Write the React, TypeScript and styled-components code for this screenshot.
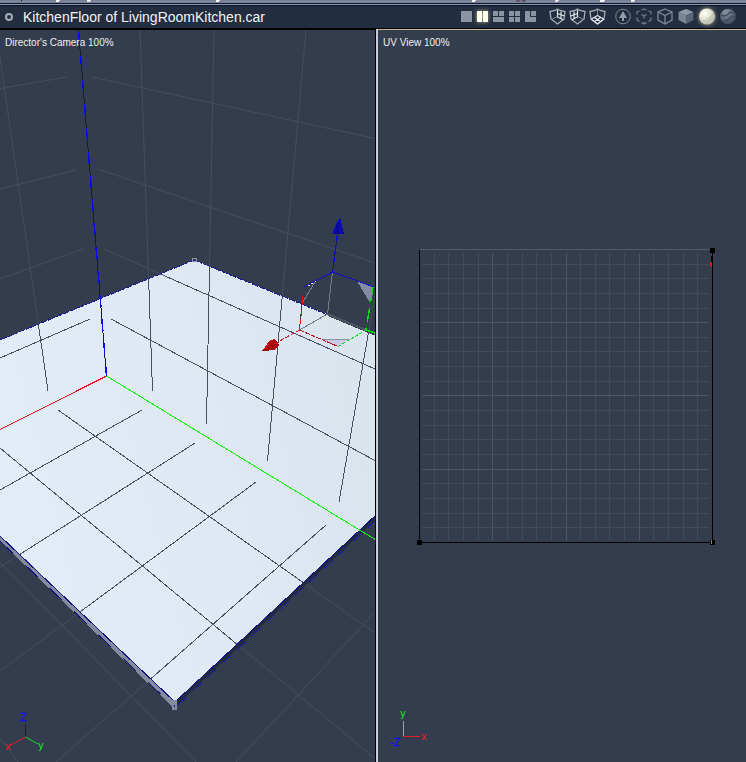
import React from "react";
import styled, { createGlobalStyle } from "styled-components";

const GlobalStyle = createGlobalStyle`
  *, *::before, *::after { box-sizing: border-box; }
  body { margin: 0; background: #333d4e; font-family: "Liberation Sans", Arial, sans-serif; }
`;

const Window = styled.main`
  display: flex;
  flex-direction: column;
  height: 100vh;
  overflow: hidden;
`;

const PaletteEdge = styled.div`
  flex: none;
  height: 6px;
  background: linear-gradient(#7b849a 0 3px, #0c1427 3px 4px, #8e9bb4 4px 5px, #0c1427 5px 6px);
  svg { display: block; }
`;

const Toolbar = styled.header`
  flex: none;
  display: flex;
  align-items: center;
  height: 23px;
  padding: 0 7px 1px 5px;
  gap: 6px;
  background: #232d40;
  border-bottom: 1px solid #000;
`;

const Title = styled.h1`
  flex: 1;
  min-width: 0;
  margin: 0 0 0 4px;
  font-size: 14px;
  line-height: 20px;
  font-weight: 400;
  color: #f1f3f5;
  white-space: nowrap;
  overflow: hidden;
`;

const ToolGroup = styled.div<{ $after?: number }>`
  display: flex;
  margin-right: ${(p) => p.$after ?? 0}px;
`;

const ToolButton = styled.button<{ $width: number; $active?: boolean }>`
  display: flex;
  align-items: center;
  justify-content: center;
  width: ${(p) => p.$width}px;
  height: 21px;
  padding: 0;
  border: 0;
  background: none;
  color: ${(p) => (p.$active ? "#fffff0" : "#8b94a2")};
  filter: ${(p) => (p.$active ? "drop-shadow(0 0 2px #b8b58a)" : "none")};
  cursor: pointer;
`;

const Dot = styled.button`
  flex: none;
  width: 8px;
  height: 8px;
  padding: 0;
  border: 2px solid #a5acb6;
  border-radius: 50%;
  background: #232d40;
`;

const Panes = styled.div`
  flex: 1;
  min-height: 0;
  display: grid;
  grid-template-columns: 375fr 3px 368fr;
`;

const Pane = styled.section<{ $edge: string }>`
  position: relative;
  min-width: 0;
  min-height: 0;
  overflow: hidden;
  border-top: 1px solid ${(p) => p.$edge};
  background: #333d4e;
`;

const Divider = styled.div`
  border-left: 1px solid #000;
  background: #c8ccdc;
`;

const PaneLabel = styled.h2`
  position: absolute;
  top: 7px;
  left: 5px;
  margin: 0;
  font-size: 10px;
  line-height: 12px;
  font-weight: 400;
  color: #eef0f2;
`;

const Scene = styled.svg`
  display: block;
  width: 100%;
  height: 100%;
`;

const Gizmo = styled.svg`
  position: absolute;
  left: 0;
  bottom: 0;
  font-family: "DejaVu Sans", sans-serif;
  font-size: 10px;
`;

type Seg = [number, number, number, number];

const gridLines: Seg[] = [
  [-4, 30, 48, 391],
  [140, 30, 152.5, 391],
  [214, 30, 206.5, 424],
  [306, 30, 267.5, 461],
  [375, 295, 339, 502],
  [0, 88.5, 67, 77],
  [0, 189, 76, 170],
  [0, 279, 83, 249],
  [0, 358, 90, 319],
  [92, 77, 375, 138.5],
  [98, 169, 375, 263],
  [104, 249, 375, 369],
  [111, 319, 375, 460.5],
  [58, 410, 375, 633],
  [0, 448, 375, 758.5],
  [0, 562, 196, 762],
  [0, 738, 18, 762],
  [142, 410, 0, 490],
  [195, 443, 0, 567],
  [256, 482, 0, 671],
  [326, 525, 56, 762],
  [375, 612, 236, 762],
];

const Lines = ({ items }: { items: Seg[] }) => (
  <>
    {items.map(([x1, y1, x2, y2], i) => (
      <line key={i} x1={x1} y1={y1} x2={x2} y2={y2} />
    ))}
  </>
);

const FLOOR = "0,340 194,260 376,334 376,515 175,702 0,536";

const CameraScene = () => (
  <Scene viewBox="0 30 375 732" preserveAspectRatio="xMidYMid slice" role="img" aria-label="Kitchen floor in perspective">
    <defs>
      <linearGradient id="floorFill" x1="0" y1="0.6" x2="1" y2="0.3">
        <stop offset="0" stopColor="#e2edf7" />
        <stop offset="0.55" stopColor="#dfe8f3" />
        <stop offset="1" stopColor="#d9e4ed" />
      </linearGradient>
      <clipPath id="floorClip">
        <polygon points={FLOOR} />
      </clipPath>
    </defs>
    <g stroke="#445061"><Lines items={gridLines} /></g>
    <g shapeRendering="crispEdges" fill="none">
      <polygon points="0,536 175,702 173,707 0,541" fill="#858b9f" />
      <polygon points="175,702 376,515 376,519 177,705" fill="#202b3c" />
      <polygon points={FLOOR} fill="url(#floorFill)" />
      <g stroke="#475062" clipPath="url(#floorClip)"><Lines items={gridLines} /></g>
      <g stroke="#13147f">
        <path d="M0 340 194 260 328 315" strokeDasharray="3 1" stroke="#1418a0" />
        <path d="M328 315 376 335" stroke="#303a48" strokeWidth="2" />
        <path d="M0 536 175 702 376 515" />
        <path d="M0 541 173 706" strokeDasharray="18 16" />
        <path d="M178 705 376 520" stroke="#151ab0" strokeDasharray="12 8" />
      </g>
      <path d="M106.500 376 0 429.500" stroke="#e01320" />
      <path d="M106.500 376 376 540" stroke="#10f010" />
      <path d="M78.500 30 106.500 376" stroke="#171d2b" />
      <path d="M78.500 30 106.500 376" stroke="#0a0af0" strokeWidth="1.500" strokeDasharray="12 12" strokeDashoffset="-2" />
      <rect x="192" y="258" width="4" height="3" stroke="#8d93a5" />
      <rect x="172" y="700" width="5" height="10" fill="#858b9f" />
      <rect x="174" y="705" width="1" height="2" fill="#1418a0" />
      <polygon points="304,287 332,272 374,287 366,330 327,314 303,304" fill="#333d4e" />
      <polygon points="357,281 373,287 370,303" fill="#858ba2" />
      <polygon points="322,339 350,339 338,347" fill="#c7cce4" />
      <path d="M322 339.500H350" stroke="#8c919f" />
      <path d="M332.500 272 327.500 314 299.500 330M315 282 303 302" stroke="#747b87" />
      <path d="M304 287 332.500 272 374 287" stroke="#1010c8" />
      <path d="M308 286 316 281" stroke="#fff" strokeDasharray="2 2" />
      <path d="M327 314 366 330" stroke="#4c5660" strokeWidth="2" />
      <path d="M337.500 234 332.500 272" stroke="#151c35" />
      <path d="M337.500 234 332.500 272" stroke="#0b0be8" strokeWidth="1.500" strokeDasharray="8 4" />
      <polygon points="340,217 344,234 332,234" fill="#0909a0" />
      <path d="M340 218 336 225 333 233M340 221V234" stroke="#1010cf" />
      <path d="M303.500 287 299.500 330" stroke="#343e50" />
      <path d="M303 295 302 305M301 311V316M300.500 319 299.500 330" stroke="#e60d18" />
      <path d="M299.500 330 338 346.500" stroke="#c30d1c" strokeDasharray="5 1" />
      <path d="M299.500 330 276 343" stroke="#d11220" strokeDasharray="4 2" />
      <polygon points="262,351 270,340 275,339 279,345 275,350" fill="#a70a0f" />
      <path d="M264 349 271 341 275 339M274 343 278 344" stroke="#e01317" />
      <path d="M338 346.500 366 330" stroke="#12d91e" strokeDasharray="3 2" />
      <path d="M373 287 366 330" stroke="#08720f" />
      <path d="M373 287 366 330" stroke="#10db14" strokeWidth="1.500" strokeDasharray="14 7" />
      <path d="M366 330 376 333.500" stroke="#12d914" strokeWidth="1.500" />
    </g>
  </Scene>
);

const STEP = 14.65;
const divisions = Array.from({ length: 19 }, (_, i) => i + 1);

const UvScene = () => (
  <Scene viewBox="378 30 368 732" preserveAspectRatio="xMidYMid slice" role="img" aria-label="Unwrapped floor on the UV grid">
    <g shapeRendering="crispEdges">
      {[false, true].map((major) => (
        <g key={String(major)} stroke={major ? "#4c5666" : "#404b5c"}>
          {divisions
            .filter((i) => (i % 5 === 0) === major)
            .map((i) => {
              const x = Math.round(419 + i * STEP) + 0.5;
              const y = Math.round(248.9 + i * STEP) + 0.5;
              return <path key={i} d={`M${x} 253V540M422 ${y}H709`} />;
            })}
        </g>
      ))}
      <path d="M420 249.500H711" stroke="#505a69" />
      <path d="M419.500 250V542.500H712.500V250" stroke="#000" fill="none" />
      <path d="M710 248h5v5h-5zM417 540h5v5h-5zM710 540h5v5h-5z" />
      <path d="M711.500 256V262" stroke="#000" />
      <path d="M710 262h2v5h-1v-1h-1z" fill="#f01015" />
      <path d="M711.500 540V544" stroke="#858b78" />
    </g>
  </Scene>
);

const LAYOUTS: [string, string][] = [
  ["Single view", "M0 0h11v11H0z"],
  ["Two views", "M0 0h5v11H0zM6 0h5v11H6z"],
  ["Three views", "M0 0h5v5H0zM6 0h5v5H6zM0 6h11v5H0z"],
  ["Four views", "M0 0h5v5H0zM6 0h5v5H6zM0 6h5v5H0zM6 6h5v5H6z"],
  ["Corner view", "M0 0h5v6h6v5H0zM6 0h5v5H6z"],
];

const SHIELD = "M8.500 1 11 2.500 16 3.500 15 11 8.500 16 2 11 1 3.500 6 2.500Z";
const PLANES: [string, string, string][] = [
  ["Right plane", "M8.500 8.500 2.500 11.500", "M8.500 2V9L14.500 12M8.500 5.500 15.500 8M12 3.500V10.500"],
  ["Left plane", "M8.500 8.500 14.500 11.500", "M8.500 2V9L2.500 12M8.500 5.500 1.500 8M5 3.500V10.500"],
  ["Floor plane", "M8.500 2V7", "M8.500 7.500 2.500 11M8.500 7.500 14.500 11M5.500 9.500 11.500 13.500M11.500 9.500 5.500 13.500M2 11 8.500 16 15 11"],
];

const CUBE = "M8 1 15 4V12L8 16 1 12V4Z";

const MODES: { label: string; active?: boolean; icon: React.ReactNode }[] = [
  {
    label: "Scene tree",
    icon: (
      <>
        <circle cx="8" cy="8.500" r="7.300" fill="none" stroke="#808997" />
        <path d="M8 3 12 10H9V13H7V10H4Z" fill="#939ba7" />
      </>
    ),
  },
  {
    label: "Bounding box",
    icon: (
      <g fill="none" stroke="#727c8d" strokeWidth="1.300">
        <path d="M5.500 2 8 1 10.500 2M12.500 3 15 4V6.500M15 9.500V12L12.500 13.500M10.500 14.700 8 16 5.500 14.700M3.500 13.500 1 12V9.500M1 6.500V4L3.500 3" />
        <path d="M8 8V10.500M8 8 5.500 6.500M8 8 10.500 6.500M8 14V16" />
      </g>
    ),
  },
  {
    label: "Wireframe",
    icon: <path d={`${CUBE}M1 4 8 7.500 15 4M8 7.500V16`} fill="none" stroke="#808a9b" strokeWidth="1.300" />,
  },
  {
    label: "Flat shading",
    icon: (
      <>
        <path d="M8 1 15.500 4 8 7.500.5 4Z" fill="#9299a5" />
        <path d="M.5 4 8 7.500V16L.5 12Z" fill="#7b8493" />
        <path d="M15.500 4 8 7.500V16L15.500 12Z" fill="#596579" />
      </>
    ),
  },
  {
    label: "Smooth shading",
    active: true,
    icon: (
      <>
        <circle cx="8" cy="8.500" r="8" fill="url(#ballLight)" />
        <path d="M2 12Q7 13 11 8T15 6Q16 12 11 15Q6 17 2 12Z" fill="#bbbda9" opacity=".55" />
      </>
    ),
  },
  {
    label: "Textured shading",
    icon: (
      <>
        <circle cx="8" cy="8.500" r="7.800" fill="url(#ballDark)" />
        <path d="M1 7Q5 9 8 6T14 5M3 13Q8 13 10 10T15 9" fill="none" stroke="#414d5f" strokeWidth="1.400" />
      </>
    ),
  },
];

const fragments: [number, number, string][] = [
  [56, 4, "#f4f4f4"],
  [87, 4, "#f4f4f4"],
  [216, 4, "#f4f4f4"],
  [472, 4, "#f4f4f4"],
  [516, 5, "#68586c"],
  [522, 4, "#5e5063"],
  [555, 4, "#e4e4e8"],
  [600, 5, "#f4f4f4"],
  [631, 4, "#f4f4f4"],
];

export default function App() {
  return (
    <Window>
      <GlobalStyle />
      <PaletteEdge>
        <svg width="746" height="3" aria-hidden="true">
          {fragments.map(([x, w, fill]) => (
            <path key={x} d={`M${x} 0h${w}v1h-1v1h-${w - 1}z`} fill={fill} />
          ))}
          <path d="M21 0h1v1h-1z" fill="#111" />
        </svg>
      </PaletteEdge>
      <Toolbar>
        <Dot aria-label="Window options" />
        <Title>KitchenFloor of LivingRoomKitchen.car</Title>
        <ToolGroup role="group" aria-label="View layout" $after={3}>
          {LAYOUTS.map(([label, d], i) => (
            <ToolButton key={label} aria-label={label} $width={16} $active={i === 1}>
              <svg width="11" height="11" fill="currentColor" shapeRendering="crispEdges"><path d={d} /></svg>
            </ToolButton>
          ))}
        </ToolGroup>
        <ToolGroup role="group" aria-label="Grid planes">
          {PLANES.map(([label, faces, mesh]) => (
            <ToolButton key={label} aria-label={label} $width={20}>
              <svg width="17" height="17" fill="none">
                <path d={SHIELD} stroke="#a8afb9" strokeWidth="1.300" />
                <path d={faces} stroke="#7c8796" />
                <path d={mesh} stroke="#e2e6ea" strokeWidth="1.200" />
              </svg>
            </ToolButton>
          ))}
        </ToolGroup>
        <ToolGroup role="group" aria-label="Shading">
          {MODES.map(({ label, active, icon }) => (
            <ToolButton key={label} aria-label={label} $width={21} $active={active}>
              <svg width="17" height="17">
                <defs>
                  <radialGradient id="ballLight" cx=".35" cy=".3" r=".75">
                    <stop offset="0" stopColor="#fffff7" />
                    <stop offset=".5" stopColor="#e3e3d5" />
                    <stop offset="1" stopColor="#b9bbac" />
                  </radialGradient>
                  <radialGradient id="ballDark" cx=".35" cy=".25" r=".8">
                    <stop offset="0" stopColor="#8b94a2" />
                    <stop offset=".6" stopColor="#5a6576" />
                    <stop offset="1" stopColor="#3b4658" />
                  </radialGradient>
                </defs>
                {icon}
              </svg>
            </ToolButton>
          ))}
        </ToolGroup>
      </Toolbar>
      <Panes>
        <Pane $edge="#000">
          <CameraScene />
          <PaneLabel>Director's Camera 100%</PaneLabel>
          <Gizmo width="60" height="50">
            <path d="M25.500 12V25" stroke="#171c28" />
            <path d="M25.500 25 9 34" stroke="#e01c26" />
            <path d="M25.500 25 38 32" stroke="#19d52a" />
            <text x="20" y="9" fill="#1010f0" stroke="#1010f0" strokeWidth=".3">Z</text>
            <text x="5" y="38" fill="#e81c22">x</text>
            <text x="38" y="37" fill="#19e82a">y</text>
          </Gizmo>
        </Pane>
        <Divider />
        <Pane $edge="#c9b88c">
          <UvScene />
          <PaneLabel>UV View 100%</PaneLabel>
          <Gizmo width="60" height="60">
            <path d="M25.500 19V35" stroke="#9aa1ad" />
            <path d="M25 34.500H42" stroke="#e01c26" />
            <text x="22" y="15" fill="#19e82a">y</text>
            <text x="43" y="38" fill="#e81c22">x</text>
            <text x="12" y="44" fill="#1010f0" stroke="#1010f0" strokeWidth=".3">-Z</text>
          </Gizmo>
        </Pane>
      </Panes>
    </Window>
  );
}
